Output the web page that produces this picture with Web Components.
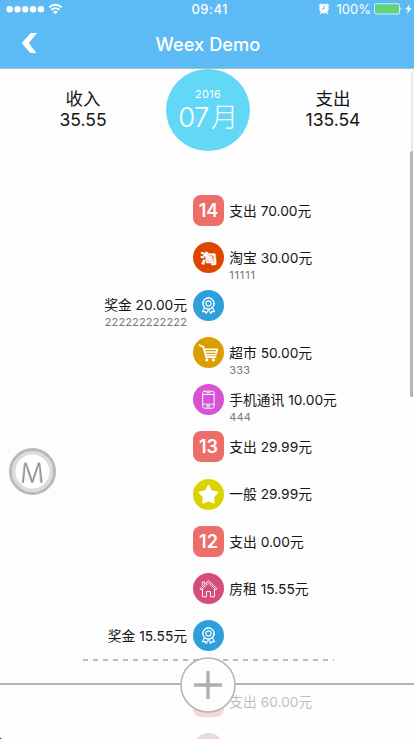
<!DOCTYPE html>
<html lang="zh-CN">
<head>
<meta charset="utf-8">
<meta name="viewport" content="width=device-width, initial-scale=1">
<title>Weex Demo</title>
<style>
    html { background: #222; }
    body {
        margin: 0;
        font-family: Inter, "Noto Sans CJK SC", sans-serif;
        color: #161616;
    }
</style>
</head>
<body>
<bill-app></bill-app>

<script>
const icons = {
    medal: `<g stroke-width="1.1"><circle cx="15.5" cy="13.5" r="5.6" stroke-dasharray="2.7 .6"/><circle cx="15.5" cy="13.5" r="5.6" stroke-width=".9"/><circle cx="15.5" cy="13.5" r="2.6"/>
        <path d="M11.5 17.8L9.4 21.7L12 21.4L13.2 23.4L15.5 19.4L17.8 23.4L19 21.4L21.6 21.7L19.5 17.8"/></g>`,
    cart: `<path d="M6.5 8.2L10.2 9.8L13.3 20.2H22.6" stroke-width="1.7"/><path d="M12 12.2H24.3L22.7 17.8H13.2M12.6 15H22.7" stroke-width="1.6"/>
        <circle cx="13.8" cy="22.8" r="1.6" fill="#fff" stroke="none"/><circle cx="20.4" cy="22.8" r="1.6" fill="#fff" stroke="none"/>`,
    phone: `<rect x="9.7" y="7.2" width="11.4" height="17" rx="1.7" stroke-width="1"/><path d="M10 10.5H21M10 20.2H21M13.5 8.8H17.4" stroke-width=".9"/><rect x="14.2" y="21.4" width="2.4" height="1.5" stroke-width=".8"/>`,
    star: `<path d="M15.5 6.8L18.2 12.1L24.5 13.3L20.2 17.6L20.9 23.6L15.5 21.3L10.1 23.6L10.8 17.6L6.5 13.3L12.8 12.1Z" fill="#fff" stroke-width="1.8"/>`,
    house: `<path d="M7.1 15.7L15.5 7.6L23.9 15.7L22.8 16.8L15.5 10L8.2 16.8ZM9.3 11.8V9H11.5V10.3M9.5 16.2V23.8H13.5V18.6H17.5V23.8H21.5V16.2" stroke-width=".9"/>`
};

class StatusBar extends HTMLElement {
    constructor() {
        super();
        this.attachShadow({ mode: 'open' }).innerHTML = `
            <style>
                :host {
                    display: grid;
                    grid-template-columns: 1fr auto 1fr;
                    align-items: center;
                    height: 17px;
                    padding: 0 2px 0 6px;
                    color: #fff;
                    font-size: 13px;
                }
                .left, .right { display: flex; align-items: center; }
                .right { justify-content: flex-end; }
                .time { font-weight: 500; letter-spacing: .5px; transform: translate(.7px, -.5px); }
                .alarm { margin-right: 7px; }
                .battery { margin: 0 2px 0 3px; }
                svg { display: block; }
            </style>
            <div class="left">
                <svg width="58" height="16" fill="#fff"><circle cx="3.7" cy="8.3" r="3.2"/><circle cx="11.5" cy="8.3" r="3.2"/><circle cx="19.3" cy="8.3" r="3.2"/><circle cx="27.1" cy="8.3" r="3.2"/><circle cx="34.9" cy="8.3" r="3.2"/>
                    <g fill="none" stroke="#fff" stroke-width="1.8"><path d="M43.2 6.4Q49.4 1.1 55.6 6.4M45.2 8.9Q49.4 5.4 53.6 8.9"/></g><path d="M46.9 10.7Q49.4 8.6 51.9 10.7L49.4 13.3Z"/></svg>
            </div>
            <div class="time">09:41</div>
            <div class="right">
                <svg class="alarm" width="12" height="13"><circle cx="6" cy="6.8" r="4.7" fill="#fff"/><path d="M1 4L3.5 1.7M11 4L8.5 1.7M3 10.8L2 12M9 10.8L10 12" stroke="#fff" stroke-width="1.4"/><path d="M6 3.7V7H3.8" fill="none" stroke="#5cbbf4"/></svg>
                <span>100%</span>
                <svg class="battery" width="29" height="12"><rect x=".5" y=".8" width="25" height="10.2" rx="1.6" fill="none" stroke="#d8f2fa"/><rect x="1.5" y="1.8" width="23" height="8.2" rx=".6" fill="#60d66c"/><path d="M26.7 4Q28.5 5.9 26.7 7.8Z" fill="#fff"/></svg>
                <svg width="7" height="12"><path d="M5 1L.4 6.6H3L2 11L6.6 5.3H4Z" fill="#fff"/></svg>
            </div>
        `;
    }
}

customElements.define('status-bar', StatusBar);

class NavBar extends HTMLElement {
    constructor() {
        super();
        this.attachShadow({ mode: 'open' }).innerHTML = `
            <style>
                :host {
                    display: grid;
                    grid-template-columns: 60px 1fr 60px;
                    align-items: center;
                    height: 51px;
                    color: #fff;
                    font-size: 18.3px;
                    font-weight: 500;
                }
                svg { display: block; margin-left: 21px; }
                .title { text-align: center; padding: 2px 0 0 2px; }
            </style>
            <svg width="17" height="22"><path d="M9.7 1H16L7.8 11L15.3 21H9.2L.7 11Z" fill="#fff"/></svg>
            <div class="title"><slot></slot></div>
        `;
    }
}

customElements.define('nav-bar', NavBar);

class MonthSummary extends HTMLElement {
    connectedCallback() {
        this.attachShadow({ mode: 'open' }).innerHTML = `
            <style>
                :host {
                    display: grid;
                    grid-template-columns: 166px 84px 166px;
                    height: 82px;
                    text-align: center;
                }
                .total { padding-top: 20px; font-size: 17.5px; line-height: 20.5px; }
                .total span { display: block; }
                .circle {
                    box-sizing: border-box;
                    padding-top: 17px;
                    border-radius: 50%;
                    background: #62d8f6;
                    color: #fff;
                    white-space: nowrap;
                }
                .year { font-size: 11px; line-height: 16px; letter-spacing: .3px; }
                .month { font-size: 27.5px; line-height: 31px; font-weight: 300; letter-spacing: -.6px; }
                .month span { margin-left: 2px; }
            </style>
            <div class="total"><span>收入</span><span>${this.getAttribute('income')}</span></div>
            <div class="circle">
                <div class="year">${this.getAttribute('year')}</div>
                <div class="month">${this.getAttribute('month')}<span>月</span></div>
            </div>
            <div class="total"><span>支出</span><span>${this.getAttribute('expense')}</span></div>
        `;
    }
}

customElements.define('month-summary', MonthSummary);

class BillRow extends HTMLElement {
    connectedCallback() {
        const day = this.getAttribute('day');
        const icon = this.getAttribute('icon');
        const note = this.getAttribute('note') || '';
        const side = this.hasAttribute('income') ? 'left' : 'right';
        let mark = day || '';
        if (icon === 'tao') mark = '<b class="tao">淘</b>';
        else if (icon) mark = `<svg width="31" height="31" viewBox="0 0 31 31" fill="none" stroke="#fff" stroke-linejoin="round" stroke-linecap="round">${icons[icon]}</svg>`;
        this.attachShadow({ mode: 'open' }).innerHTML = `
            <style>
                :host {
                    display: grid;
                    grid-template-columns: 187px 31px 1fr;
                    column-gap: 6px;
                    height: 47.28px;
                    font-size: 13.75px;
                    white-space: nowrap;
                }
                .badge {
                    display: flex;
                    align-items: center;
                    justify-content: center;
                    height: 31px;
                    border-radius: ${day ? '8px' : '50%'};
                    background: ${this.getAttribute('color') || '#ed6d69'};
                    color: #fff;
                    font-size: 18px;
                    font-weight: 600;
                }
                .tao { font: 900 14.5px "Noto Sans CJK SC", sans-serif; transform: scaleX(1.16) skewX(6deg); }
                .text { grid-row: 1; padding-top: 5.8px; line-height: 20px; }
                .left { grid-column: 1; text-align: right; }
                .right { grid-column: 3; margin-left: -.7px; }
                .badge { grid-column: 2; grid-row: 1; }
                .note { font-size: 11px; line-height: 14px; letter-spacing: var(--note-spacing, .15px); color: #777; }
            </style>
            <div class="badge">${mark}</div>
            <div class="text ${side}"><slot></slot><div class="note">${note}</div></div>
        `;
    }
}

customElements.define('bill-row', BillRow);

class AddBar extends HTMLElement {
    constructor() {
        super();
        this.attachShadow({ mode: 'open' }).innerHTML = `
            <style>
                /* floats over the end of the list */
                :host {
                    position: absolute;
                    left: 0;
                    right: 0;
                    bottom: 0;
                    height: 56px;
                    box-sizing: border-box;
                    border-top: 2px solid #b3b3b3;
                    background: rgba(253, 253, 253, .72);
                }
                svg { display: block; margin: -28px auto 0; position: relative; left: 1px; }
            </style>
            <svg width="56" height="56"><circle cx="28" cy="28" r="27" fill="#fdfdfd" stroke="#b5b5b5" stroke-width="1.6"/><path d="M28 14V42M14 28H42" stroke="#b0adb0" stroke-width="3.4"/></svg>
        `;
    }
}

customElements.define('add-bar', AddBar);

class FloatButton extends HTMLElement {
    constructor() {
        super();
        this.attachShadow({ mode: 'open' }).innerHTML = `
            <style>
                :host {
                    position: absolute;
                    left: 9px;
                    top: 448px;
                    box-sizing: border-box;
                    display: flex;
                    align-items: center;
                    justify-content: center;
                    width: 47px;
                    height: 47px;
                    border: 3.5px solid #b9b8ba;
                    border-radius: 50%;
                    background: #fff;
                    box-shadow: inset 0 0 0 3.5px #dddbdf;
                    color: #8c8c8c;
                    font-size: 25px;
                    font-weight: 300;
                }
                /* tilted back so that the legs spread */
                span { transform: perspective(36px) rotateX(24deg) scale(1.02, 1.16); }
            </style>
            <span><slot></slot></span>
        `;
    }
}

customElements.define('float-button', FloatButton);

class BillApp extends HTMLElement {
    constructor() {
        super();
        this.attachShadow({ mode: 'open' }).innerHTML = `
            <style>
                :host {
                    display: block;
                    position: relative;
                    height: 739px;
                    overflow: hidden;
                    background: #fdfdfd;
                    border-radius: 0 0 1px 3px;
                }
                header { background: #5cbbf4; border-bottom: 1px solid #a9bdca; }
                .list { padding-top: 44px; }
                .divider {
                    height: 2px;
                    margin: -8.5px 80px 24.9px 83px;
                    background: repeating-linear-gradient(90deg, #bbb 0 5px, transparent 5px 10px);
                }
                .track {
                    position: absolute;
                    top: 72px;
                    right: 1px;
                    width: 2px;
                    height: 325px;
                    background: #e8e8e8;
                }
                .thumb { margin: 79px 0 0 -1px; width: 3px; height: 246px; border-radius: 2px; background: #b5b5b5; }
            </style>
            <header>
                <status-bar></status-bar>
                <nav-bar>Weex Demo</nav-bar>
            </header>
            <month-summary income="35.55" expense="135.54" year="2016" month="07"></month-summary>
            <div class="list">
                <bill-row day="14">支出 70.00元</bill-row>
                <bill-row icon="tao" color="#de4600" note="11111" style="--note-spacing: .8px">淘宝 30.00元</bill-row>
                <bill-row icon="medal" color="#2f9fdc" note="222222222222" income>奖金 20.00元</bill-row>
                <bill-row icon="cart" color="#d99f00" note="333">超市 50.00元</bill-row>
                <bill-row icon="phone" color="#d553d4" note="444">手机通讯 10.00元</bill-row>
                <bill-row day="13">支出 29.99元</bill-row>
                <bill-row icon="star" color="#d9d300">一般 29.99元</bill-row>
                <bill-row day="12">支出 0.00元</bill-row>
                <bill-row icon="house" color="#d44d7c">房租 15.55元</bill-row>
                <bill-row icon="medal" color="#2f9fdc" income>奖金 15.55元</bill-row>
                <div class="divider"></div>
                <!-- its day stays hidden behind the add button -->
                <bill-row day=" ">支出 60.00元</bill-row>
                <bill-row color="#c070bd"></bill-row>
            </div>
            <div class="track"><div class="thumb"></div></div>
            <add-bar></add-bar>
            <float-button>M</float-button>
        `;
    }
}

customElements.define('bill-app', BillApp);
</script>
</body>
</html>
